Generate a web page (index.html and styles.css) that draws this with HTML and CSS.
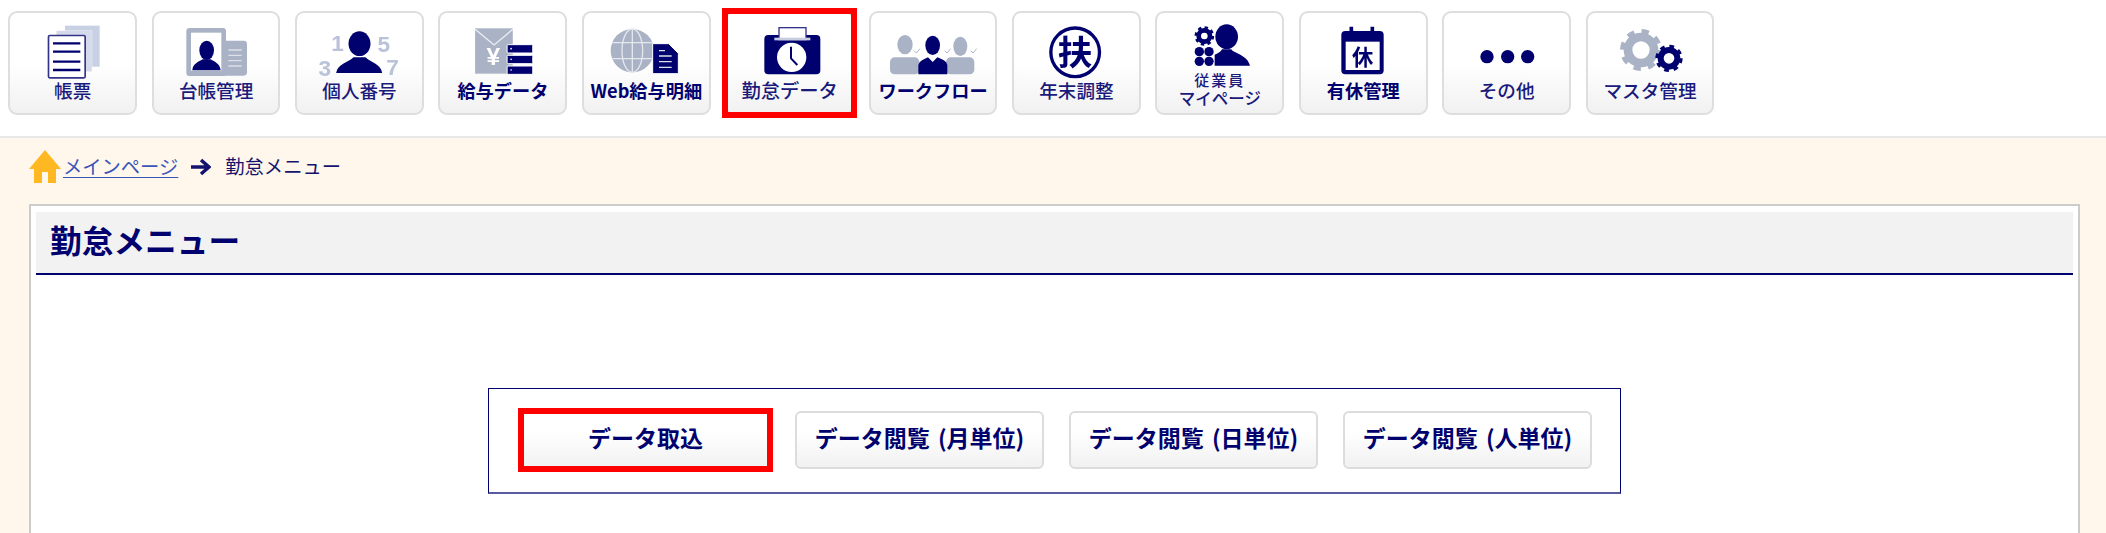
FILE: index.html
```html
<!DOCTYPE html>
<html lang="ja">
<head>
<meta charset="utf-8">
<title>勤怠メニュー</title>
<link rel="stylesheet" href="styles.css">
</head>
<body>
<nav class="nav">
  <a class="tile">
    <svg class="ico" viewBox="68 63 300 180"><rect class="s" x="194" y="77" width="104" height="123"/><rect class="s2" x="168" y="92" width="107" height="123"/><rect class="frame" x="144.5" y="106.500" width="110" height="127" rx="4"/><path class="bars" d="M158 130H240M158 155H240M158 185H240M158 210H240"/></svg>
    <span class="lbl">帳票</span>
  </a>
  <a class="tile">
    <svg class="ico" viewBox="498 63 300 180"><rect class="g" x="640" y="122" width="101" height="105" rx="10"/><rect class="g" x="559" y="84" width="119" height="144" rx="10"/><rect class="w" x="573" y="98" width="91" height="114"/><ellipse class="n" cx="620" cy="151" rx="22" ry="29"/><path class="n" d="M577 211C578 190 596 186 608 178H632C644 186 660 190 662 211Z"/><path class="ln" d="M685 150H725M685 166H725M685 182H725M685 198H725"/></svg>
    <span class="lbl">台帳管理</span>
  </a>
  <a class="tile">
    <svg class="ico" viewBox="928.500 63 300 180"><text class="num" x="1014" y="152">1</text><text class="num" x="1153" y="157">5</text><text class="num" x="976" y="228">3</text><text class="num" x="1179" y="224">7</text><ellipse class="n" cx="1080" cy="131" rx="33" ry="37"/><path class="n" d="M1010 219C1014 192 1048 186 1062 172H1098C1112 186 1144 192 1148 219Z"/></svg>
    <span class="lbl">個人番号</span>
  </a>
  <a class="tile">
    <svg class="ico" viewBox="68.700 63 300 180"><rect class="g" x="135" y="85" width="113" height="136"/><path class="fold" d="M135 88L192 135L248 88"/><text class="yen" x="190" y="195">¥</text><rect class="n edge" x="231" y="134" width="77" height="25" rx="3"/><rect class="n edge" x="231" y="166" width="77" height="25" rx="3"/><rect class="n edge" x="231" y="198" width="77" height="25" rx="3"/><circle class="w" cx="243" cy="146" r="2.500"/><circle class="w" cx="243" cy="178" r="2.500"/><circle class="w" cx="243" cy="210" r="2.500"/></svg>
    <span class="lbl lbl-b">給与データ</span>
  </a>
  <a class="tile">
    <svg class="ico" viewBox="499 63 300 180"><circle class="g" cx="608" cy="152" r="65"/><ellipse class="globe" cx="608" cy="152" rx="31" ry="65"/><path class="globe" d="M548 128H668M548 176H668M608 87V217"/><path class="n edge" d="M669 131H717L746 160V221H669Z"/><path class="ln" d="M688 152H706M688 168H726M688 185H726M688 202H726"/></svg>
    <span class="lbl lbl-b">Web給与明細</span>
  </a>
  <a class="tile tile-on">
    <svg class="ico" viewBox="929 63 300 180"><rect class="n" x="1002" y="105" width="168" height="118" rx="12"/><rect class="paper" x="1046" y="83" width="81" height="38"/><rect class="clip" x="1032" y="113" width="108" height="8"/><circle class="w" cx="1084" cy="172" r="44"/><path class="hand" d="M1082 140V175L1101 195"/></svg>
    <span class="lbl lbl-w">勤怠データ</span>
  </a>
  <a class="tile">
    <svg class="ico" viewBox="69 63 300 180"><ellipse class="g" cx="135" cy="134" rx="23" ry="29"/><rect class="g" x="90" y="172" width="88" height="51" rx="14"/><ellipse class="g" cx="301" cy="139" rx="21" ry="29"/><rect class="g" x="258" y="172" width="85" height="51" rx="14"/><ellipse class="n" cx="218" cy="136" rx="22" ry="29"/><path class="n" d="M175 223V196C178 182 192 178 204 172L218 186L232 172C246 178 260 182 262 196V223Z"/><path class="chk" d="M162 152L169 159L180 146M254 152L261 159L272 146M332 152L339 159L350 146"/></svg>
    <span class="lbl lbl-b">ワークフロー</span>
  </a>
  <a class="tile">
    <svg class="ico" viewBox="499.500 63 300 180"><circle class="ring" cx="647" cy="157" r="73"/><text class="kan kan-l" x="647" y="194">扶</text></svg>
    <span class="lbl">年末調整</span>
  </a>
  <a class="tile">
    <svg class="ico ico-s" viewBox="930 63 300 150"><circle class="gear-n" cx="1033" cy="108" r="17"/><circle class="gear-t" cx="1033" cy="108" r="25"/><circle class="n" cx="1018" cy="155" r="14"/><circle class="n" cx="1047" cy="155" r="14"/><circle class="n" cx="1018" cy="184" r="14"/><circle class="n" cx="1047" cy="184" r="14"/><ellipse class="n" cx="1100" cy="110" rx="34" ry="37"/><path class="n" d="M1064 197V164C1076 160 1082 155 1086 148H1114C1120 160 1162 164 1170 197Z"/></svg>
    <span class="lbl lbl-2"><span class="sub">従業員</span><span>マイページ</span></span>
  </a>
  <a class="tile">
    <svg class="ico" viewBox="70 63 300 180"><path class="ringbar" d="M185 80V100M248 80V100"/><rect class="n" x="155" y="93" width="127" height="130" rx="12"/><rect class="w" x="168" y="125" width="102" height="85"/><text class="kan kan-s" x="219" y="194">休</text></svg>
    <span class="lbl lbl-b">有休管理</span>
  </a>
  <a class="tile">
    <svg class="ico" viewBox="500 63 300 180"><circle class="n" cx="590" cy="170" r="20"/><circle class="n" cx="652" cy="170" r="20"/><circle class="n" cx="712" cy="170" r="20"/></svg>
    <span class="lbl">その他</span>
  </a>
  <a class="tile">
    <svg class="ico" viewBox="930 63 300 180"><circle class="gear-big" cx="1053" cy="150" r="39"/><circle class="gear-big-t" cx="1053" cy="150" r="56"/><circle class="gear-sm" cx="1137" cy="175" r="25"/><circle class="gear-sm-t" cx="1137" cy="175" r="36"/></svg>
    <span class="lbl">マスタ管理</span>
  </a>
</nav>
<main class="main">
  <div class="crumbs">
    <svg class="home" viewBox="0 0 32 33"><path d="M16 0L32 19H27V33H19V22H13V33H5V19H0Z"/></svg>
    <a class="crumb-link">メインページ</a>
    <svg class="arrow" viewBox="0 0 21 18"><path d="M1 9H18M11 2L19 9L11 16"/></svg>
    <span class="crumb-now">勤怠メニュー</span>
  </div>
  <section class="panel">
    <h1 class="title">勤怠メニュー</h1>
    <div class="box">
      <a class="btn btn-on">データ取込</a>
      <a class="btn">データ閲覧 (月単位)</a>
      <a class="btn">データ閲覧 (日単位)</a>
      <a class="btn">データ閲覧 (人単位)</a>
    </div>
  </section>
</main>
</body>
</html>
```
FILE: styles.css
```css
* { box-sizing: border-box; }
html, body { margin: 0; height: 100%; overflow: hidden; }
body {
  display: flex;
  flex-direction: column;
  background: #fff;
  color: #00006e;
  font-family: "Noto Sans CJK JP", "Noto Sans", sans-serif;
}

/* top icon bar */
.nav {
  display: flex;
  gap: 14.6px;
  height: 138px;
  padding: 11px 0 0 8.3px;
  border-bottom: 2px solid #e8e8e8;
  flex: none;
}
.tile {
  position: relative;
  flex: none;
  display: flex;
  flex-direction: column;
  align-items: center;
  width: 128.8px;
  height: 104px;
  padding-top: 8px;
  border: 2px solid #dedede;
  border-radius: 9px;
  background: linear-gradient(#fff 0%, #fff 50%, #f1f1f1 100%);
}
.tile-on::after {
  content: "";
  position: absolute;
  inset: -5px -5px -5px -5.300px;
  border: 6px solid #f00;
}
.ico { display: block; width: 100px; height: 60px; flex: none; filter: blur(0.3px); }
.ico-s { height: 50px; }
.lbl {
  margin-top: -1px;
  font-size: 18.600px;
  line-height: 20px;
  white-space: nowrap;
  font-weight: 500;
  color: #1a1a7c;
}
.lbl-b { font-size: 18.200px; font-weight: 700; color: #00006e; }
.lbl-w { font-size: 19.300px; }
.lbl-2 {
  display: flex;
  flex-direction: column;
  align-items: center;
  font-size: 16.500px;
  line-height: 19px;
}
.sub { font-size: 15px; letter-spacing: 2px; }

/* svg parts */
.g { fill: #aab2c5; }
.n { fill: #00006e; }
.w { fill: #fff; }
.s { fill: #c8d0e4; }
.s2 { fill: #d4daeb; stroke: #fff; stroke-width: 1; }
.frame { fill: #fff; stroke: #333388; stroke-width: 5; }
.bars { fill: none; stroke: #00006e; stroke-width: 7; }
.ln { fill: none; stroke: #dde0e8; stroke-width: 4; }
.num { fill: #b9c2d8; font: 700 68px "Liberation Sans", sans-serif; text-anchor: middle; }
.fold { fill: none; stroke: #eceef3; stroke-width: 4; }
.yen { fill: #fff; font: 700 74px "Liberation Sans", sans-serif; text-anchor: middle; }
.edge { stroke: #fff; stroke-width: 3; }
.globe { fill: none; stroke: #e4e7ee; stroke-width: 4; }
.paper { fill: #fff; stroke: #33338a; stroke-width: 4; }
.clip { fill: #c8cee0; }
.hand { fill: none; stroke: #00006e; stroke-width: 6; }
.chk { fill: none; stroke: #aab2c5; stroke-width: 3; }
.ring { fill: #fff; stroke: #00006e; stroke-width: 10; }
.kan { fill: #00006e; font-family: "Noto Sans CJK JP", sans-serif; font-weight: 700; text-anchor: middle; }
.kan-l { font-size: 104px; }
.kan-s { font-size: 64px; }
.ringbar { fill: none; stroke: #00006e; stroke-width: 11; }
.gear-n { fill: none; stroke: #00006e; stroke-width: 14; }
.gear-t { fill: none; stroke: #00006e; stroke-width: 9; stroke-dasharray: 10 9.630; }
.gear-big { fill: none; stroke: #aab2c5; stroke-width: 26; }
.gear-big-t { fill: none; stroke: #aab2c5; stroke-width: 14; stroke-dasharray: 22 21.980; }
.gear-sm { fill: none; stroke: #00006e; stroke-width: 18; }
.gear-sm-t { fill: none; stroke: #00006e; stroke-width: 10; stroke-dasharray: 14 14.270; }

/* page body */
.main {
  flex: 1;
  display: flex;
  flex-direction: column;
  min-height: 0;
  padding: 0 26px 0 29px;
  background: #fff6ec;
}
.crumbs {
  display: flex;
  align-items: center;
  height: 66px;
  flex: none;
  padding-bottom: 10px;
  font-size: 19.300px;
  line-height: 26px;
}
.home { width: 32px; height: 33px; margin-right: 2px; fill: #ffb822; flex: none; }
.crumb-link { color: #3a55b8; text-decoration: underline; text-underline-offset: 3px; }
.arrow { width: 21px; height: 18px; margin: 2px 14px 0 12px; fill: none; stroke: #14146e; stroke-width: 3.500; flex: none; }
.crumb-now { color: #14146e; }

.panel {
  flex: 1;
  min-height: 0;
  padding: 6px 5px 0;
  border: 2px solid #ccc;
  border-bottom: 0;
  background: #fff;
}
.title {
  margin: 0;
  height: 63px;
  padding-left: 14px;
  border-bottom: 2px solid #00006e;
  background: #f2f2f2;
  font-size: 31.700px;
  line-height: 54px;
  font-weight: 700;
  color: #00006e;
}
.box {
  display: flex;
  align-items: center;
  gap: 25px;
  width: fit-content;
  height: 106px;
  margin: 113px auto 0;
  padding: 0 28px 2px 32px;
  border: 1px solid #00006e;
  border-bottom: 2px solid #5a5aa0;
}
.btn {
  position: relative;
  display: flex;
  align-items: center;
  justify-content: center;
  width: 249px;
  height: 58px;
  padding-bottom: 5px;
  border: 2px solid #dcdcdc;
  border-radius: 6px;
  background: linear-gradient(#fff 0%, #fff 35%, #f1f1f1 100%);
  font-size: 23px;
  word-spacing: 3px;
  line-height: 30px;
  font-weight: 700;
  color: #00006e;
  white-space: nowrap;
}
.btn-on::after {
  content: "";
  position: absolute;
  inset: -5px;
  border: 6px solid #f00;
}
```
